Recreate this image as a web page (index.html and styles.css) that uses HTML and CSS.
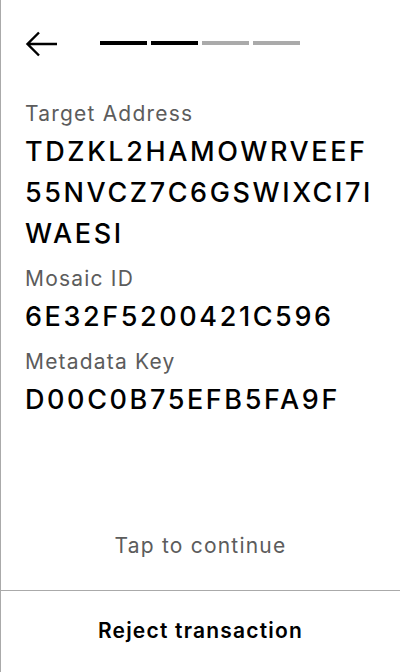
FILE: index.html
```html
<!DOCTYPE html>
<html lang="en">
<head>
<meta charset="utf-8">
<title>Confirm metadata</title>
<link rel="stylesheet" href="styles.css">
</head>
<body>
<div class="screen">
  <header class="header">
    <svg class="back" width="32" height="28" viewBox="0 0 32 28" aria-hidden="true">
      <path d="M32 14H2.5M14 2.5L2.5 14L14 25.5" fill="none" stroke="#000" stroke-width="2.4"/>
    </svg>
    <div class="progress">
      <span class="step done"></span>
      <span class="step done"></span>
      <span class="step"></span>
      <span class="step"></span>
    </div>
  </header>
  <main class="content">
    <div class="field">
      <div class="label">Target Address</div>
      <div class="value"><span class="line">TDZKL2HAMOWRVEEF</span><span class="line">55NVCZ7C6GSWIXCI7I</span><span class="line">WAESI</span></div>
    </div>
    <div class="field">
      <div class="label">Mosaic ID</div>
      <div class="value">6E32F5200421C596</div>
    </div>
    <div class="field">
      <div class="label">Metadata Key</div>
      <div class="value">D00C0B75EFB5FA9F</div>
    </div>
  </main>
  <div class="tap">Tap to continue</div>
  <button class="reject" type="button">Reject transaction</button>
</div>
</body>
</html>
```
FILE: styles.css
```css
html, body {
  margin: 0;
  padding: 0;
  background: #fff;
}
body {
  font-family: "Inter", "Liberation Sans", sans-serif;
  color: #000;
}
.screen {
  box-sizing: border-box;
  width: 400px;
  height: 672px;
  border-left: 1px solid #aaa;
  display: flex;
  flex-direction: column;
}
.header {
  height: 86px;
  display: flex;
  align-items: center;
  padding-left: 24px;
  flex-shrink: 0;
}
.back {
  display: block;
  margin-top: 1px;
}
.progress {
  display: flex;
  gap: 4px;
  margin-left: 43px;
  margin-bottom: 1px;
}
.step {
  width: 47px;
  height: 4px;
  background: #aaa;
}
.step.done {
  background: #000;
}
.content {
  flex: 1;
  padding: 14px 24px 0;
}
.field + .field {
  margin-top: 11px;
}
.label {
  font-size: 21px;
  line-height: 28px;
  letter-spacing: 1.2px;
  color: #5c5c5c;
  margin-bottom: 3px;
}
.value {
  font-size: 27px;
  line-height: 41px;
  letter-spacing: 2.6px;
  font-weight: 500;
}
.line {
  display: block;
}
.tap {
  font-size: 21px;
  line-height: 28px;
  letter-spacing: 1.2px;
  color: #5c5c5c;
  text-align: center;
  padding-bottom: 30px;
}
.reject {
  flex-shrink: 0;
  height: 82px;
  border: 0;
  border-top: 1px solid #aaa;
  background: #fff;
  font-family: inherit;
  font-size: 21px;
  font-weight: 600;
  letter-spacing: 1.2px;
  color: #000;
  padding: 0 0 2px;
  margin: 0;
}
```
